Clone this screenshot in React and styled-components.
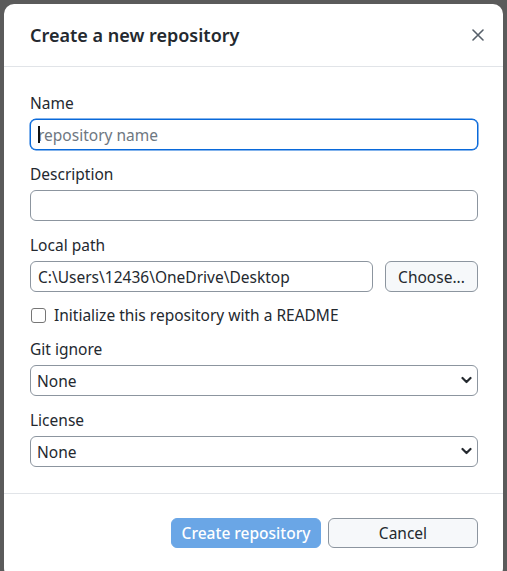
import React from 'react';
import styled, { createGlobalStyle } from 'styled-components';

const TEXT = '#24292f';
const BORDER = '#8c959f';

const GlobalStyle = createGlobalStyle`
    html, body {
        margin: 0;
        padding: 0;
        background: #5b5b5b;
        overflow: hidden;
    }
    body {
        font-family: "Noto Sans", "Open Sans", sans-serif;
        color: ${TEXT};
    }
`;

const Backdrop = styled.div`
    width: 507px;
    height: 571px;
    padding: 4px 4px 0 4px;
    box-sizing: border-box;
    overflow: hidden;
`;

const Dialog = styled.div`
    width: 499px;
    background: #fff;
    border-radius: 10px;
    display: flex;
    flex-direction: column;
    padding-bottom: 30px;
`;

const Header = styled.div`
    height: 62px;
    display: flex;
    align-items: center;
    justify-content: space-between;
    padding: 0 15px 0 26px;
    border-bottom: 1px solid #e1e4e8;
`;

const Title = styled.h1`
    margin: 0;
    font-size: 18px;
    font-weight: 600;
    color: ${TEXT};
`;

const Close = styled.button`
    border: none;
    background: none;
    padding: 4px;
    display: flex;
    color: #57606a;
    cursor: pointer;
`;

const Body = styled.div`
    padding: 26px 25px 26px 26px;
    display: flex;
    flex-direction: column;
    border-bottom: 1px solid #e1e4e8;
`;

const Field = styled.div`
    display: flex;
    flex-direction: column;
    margin-top: ${p => p.$top || 0}px;
`;

const Label = styled.label`
    font-size: 15.5px;
    line-height: 20px;
    margin-bottom: 6px;
`;

const TextInput = styled.input`
    height: 31px;
    box-sizing: border-box;
    width: 100%;
    border: 1px solid ${p => (p.$focus ? '#0969da' : BORDER)};
    box-shadow: ${p => (p.$focus ? '0 0 0 0.5px #0969da' : 'none')};
    border-radius: 6px;
    padding: 0 7px;
    font-family: inherit;
    font-size: 15.5px;
    color: ${TEXT};
    background: #fff;
    outline: none;
    &::placeholder {
        color: #6e7781;
    }
`;

const InputWrap = styled.div`
    position: relative;
    flex: 1;
    display: flex;
`;

const Caret = styled.span`
    position: absolute;
    left: 8px;
    top: 7px;
    width: 1.5px;
    height: 17px;
    background: #111;
`;

const Row = styled.div`
    display: flex;
    gap: 12px;
`;

const Button = styled.button`
    height: ${p => p.$height || 30}px;
    width: ${p => p.$width || 150}px;
    box-sizing: border-box;
    border-radius: 6px;
    font-family: inherit;
    font-size: 15.5px;
    cursor: pointer;
    border: 1px solid ${p => (p.$primary ? '#6aa6e6' : BORDER)};
    background: ${p => (p.$primary ? '#6aa6e6' : '#f6f8fa')};
    color: ${p => (p.$primary ? '#fff' : TEXT)};
    font-weight: ${p => (p.$primary ? 500 : 400)};
`;

const CheckRow = styled.label`
    display: flex;
    align-items: center;
    gap: 8px;
    margin-top: 13px;
    height: 20px;
    font-size: 15.5px;
`;

const Box = styled.span`
    width: 13px;
    height: 13px;
    border: 1px solid #767676;
    border-radius: 3px;
    background: #fff;
    margin-left: 1px;
`;

const SelectWrap = styled.div`
    position: relative;
    display: flex;
`;

const Select = styled.select`
    appearance: none;
    width: 100%;
    height: 31px;
    box-sizing: border-box;
    border: 1px solid ${BORDER};
    border-radius: 6px;
    padding: 0 6px;
    font-family: inherit;
    font-size: 15.5px;
    color: ${TEXT};
    background: #fff;
    outline: none;
`;

const Chevron = styled.svg`
    position: absolute;
    right: 6px;
    top: 11px;
    pointer-events: none;
`;

const Footer = styled.div`
    display: flex;
    justify-content: flex-end;
    gap: 7px;
    padding: 24px 25px 0 0;
`;

const Dropdown = ({ label, top }) => (
    <Field $top={top}>
        <Label>{label}</Label>
        <SelectWrap>
            <Select defaultValue="none">
                <option value="none">None</option>
            </Select>
            <Chevron width="11" height="8" viewBox="0 0 11 8">
                <path d="M1.5 2 L5.5 6 L9.5 2" fill="none" stroke="#24292f" strokeWidth="2.2" strokeLinecap="round" strokeLinejoin="round" />
            </Chevron>
        </SelectWrap>
    </Field>
);

export default function App() {
    return (
        <>
            <GlobalStyle />
            <Backdrop>
                <Dialog>
                    <Header>
                        <Title>Create a new repository</Title>
                        <Close aria-label="Close">
                            <svg width="12" height="12" viewBox="0 0 12 12">
                                <path d="M1 1 L11 11 M11 1 L1 11" stroke="currentColor" strokeWidth="1.6" strokeLinecap="round" />
                            </svg>
                        </Close>
                    </Header>
                    <Body>
                        <Field>
                            <Label>Name</Label>
                            <InputWrap>
                                <TextInput $focus placeholder="repository name" />
                                <Caret />
                            </InputWrap>
                        </Field>
                        <Field $top={14}>
                            <Label>Description</Label>
                            <TextInput />
                        </Field>
                        <Field $top={14}>
                            <Label>Local path</Label>
                            <Row>
                                <InputWrap>
                                    <TextInput defaultValue="C:\Users\12436\OneDrive\Desktop" />
                                </InputWrap>
                                <Button $width={93} $height={31}>Choose...</Button>
                            </Row>
                        </Field>
                        <CheckRow>
                            <Box />
                            Initialize this repository with a README
                        </CheckRow>
                        <Dropdown label="Git ignore" top={14} />
                        <Dropdown label="License" top={14} />
                    </Body>
                    <Footer>
                        <Button $primary>Create repository</Button>
                        <Button>Cancel</Button>
                    </Footer>
                </Dialog>
            </Backdrop>
        </>
    );
}
